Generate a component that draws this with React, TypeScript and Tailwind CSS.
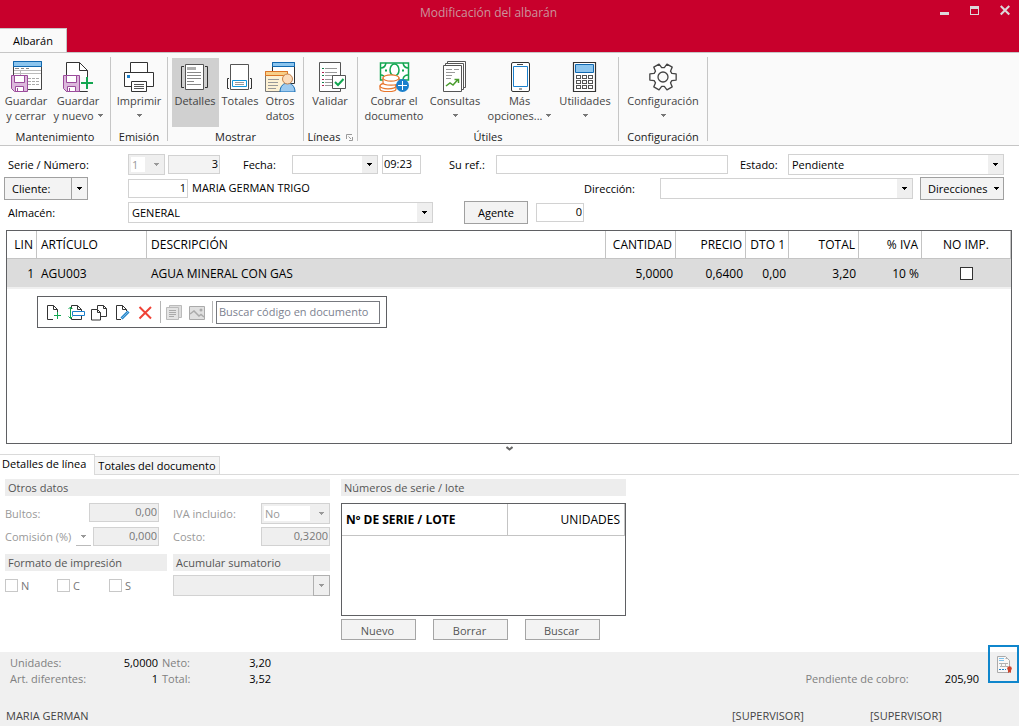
import React from "react";

function Caret({ className = "" }: { className?: string }) {
  return (
    <svg width="5" height="3" viewBox="0 0 5 3" className={"inline-block shrink-0 " + className} aria-hidden="true">
      <path d="M0 0H5V1H4V2H3V3H2V2H1V1H0Z" fill="currentColor" />
    </svg>
  );
}

function Icon({ children, size = 32 }: { children: React.ReactNode; size?: number }) {
  return (
    <svg width={size} height={size} viewBox={`0 0 ${size} ${size}`} fill="none" className="shrink-0" aria-hidden="true">
      {children}
    </svg>
  );
}

function Disk() {
  return (
    <g>
      <path d="M1.5 15.5H17.5V31.5H4.5L1.5 28.5Z" fill="#dcb8dc" stroke="#9b4b9b" />
      <path d="M4.5 15.5H14.5V22.5H4.5Z" fill="#fff" stroke="#9b4b9b" />
      <path d="M5.5 26.5H13.5V31.5H5.5Z" fill="#fff" stroke="#9b4b9b" />
      <path d="M7.5 28V31" stroke="#9b4b9b" />
    </g>
  );
}

const SaveCloseIcon = () => (
  <Icon>
    <path d="M3.5 1.5H31.5V29.5H3.5Z" fill="#fff" stroke="#444" />
    <path d="M3.5 1.5H31.5V6.5H3.5Z" fill="#8cc5ee" stroke="#1068b0" />
    <path d="M5 8.5H9M11 8.5H14M16 8.5H19" stroke="#888" />
    <path d="M4 10.500H31M4 13.500H31M10.500 11V16" stroke="#bbb" />
    <path d="M18 18.500H29M18 21.500H29M18 24.500H29" stroke="#aaa" strokeDasharray="3 1" />
    <Disk />
  </Icon>
);

const SaveNewIcon = () => (
  <Icon>
    <path d="M4.500 2.500H17.500L25.500 10.500V31.500H4.500Z" fill="#fff" stroke="#333" />
    <path d="M17.500 2.500V10.500H25.500" stroke="#333" />
    <path d="M18 17H32V31H18Z" fill="#fafafa" />
    <Disk />
    <path d="M25 17V29M19 23H31" stroke="#12a650" strokeWidth="2" />
  </Icon>
);

const PrinterIcon = () => (
  <Icon>
    <path d="M7.500 2.500H24.500V13H7.500Z" fill="#fff" stroke="#333" />
    <path d="M1.500 12.500H30.500V26.500H1.500Z" fill="#fff" stroke="#333" />
    <path d="M8.500 21.500H23.500V31.500H8.500Z" fill="#fff" stroke="#333" />
    <path d="M4 15H7V18H4Z" fill="#1b80cc" />
    <path d="M11 24.500H21M11 26.500H21M11 28.500H21" stroke="#555" />
  </Icon>
);

const DetailsIcon = () => (
  <Icon>
    <path d="M6.500 4.500H24.500V29.500H6.500Z" fill="#fff" stroke="#555" />
    <path d="M8 7H17V10H8Z" fill="#b0b0b0" />
    <path d="M8 12.500H22M8 15.500H22M8 18.500H22M8 21.500H15M8 24.500H22" stroke="#888" />
    <path d="M5 6.500H2.500V27.500H5M26 6.500H28.500V27.500H26" stroke="#333" />
  </Icon>
);

const TotalsIcon = () => (
  <Icon>
    <path d="M6.500 4.500H24.500V29.500H6.500Z" fill="#fff" stroke="#555" />
    <path d="M8.500 20.500H22.500V26.500H8.500Z" stroke="#1398dc" fill="#fff" />
    <path d="M11 22.500H20M11 24.500H20" stroke="#999" />
    <path d="M5 18.500H3.500V28.500H5M26 18.500H27.500V28.500H26" stroke="#333" />
  </Icon>
);

const OtherIcon = () => (
  <Icon>
    <path d="M8.500 2.500H30.500V23.500H8.500Z" fill="#fff" stroke="#333" />
    <path d="M8.500 2.500H30.500V6.500H8.500Z" fill="#8cc5ee" stroke="#1068b0" />
    <path d="M1.500 11.500H23.500V31.500H1.500Z" fill="#fdf1d4" stroke="#777" />
    <path d="M1.500 11.500H23.500V15.500H1.500Z" fill="#f8cf88" stroke="#dd7626" />
    <path d="M4 19.500H15M4 22.500H14M4 25.500H14M4 28.500H12" stroke="#999" />
    <path d="M16 32C16 20 31 20 31 32Z" fill="#9ccaf0" stroke="#1068b0" />
    <circle cx="23.500" cy="19" r="5" fill="#fbdcbc" stroke="#c4824d" />
  </Icon>
);

const ValidateIcon = () => (
  <Icon>
    <path d="M5.500 2.500H26.500V31.500H5.500Z" fill="#fff" stroke="#555" />
    <path d="M11 8.500H23M11 12.500H23M11 15.500H23M11 19.500H19M11 22.500H19M11 25.500H19" stroke="#999" />
    <path d="M8 8.500H10M8 15.500H10M8 22.500H10" stroke="#12804c" />
    <path d="M8 12.500H10M8 19.500H10M8 25.500H10" stroke="#b02050" />
    <path d="M18.500 15.500H31.500V28.500H18.500Z" fill="#fff" stroke="#555" />
    <path d="M21 22L24 25L29.500 19" stroke="#12a650" strokeWidth="2" />
  </Icon>
);

const MoneyIcon = () => (
  <Icon>
    <path d="M2.500 3H30.500V20H2.500Z" fill="#fff" stroke="#12a650" strokeWidth="1.500" />
    <path d="M3 8Q7 8 8 3M25 3Q26 8 30 8M3 15Q6 15 8 20M25 19Q26 15 30 15" stroke="#12a650" strokeWidth="1.500" />
    <ellipse cx="16.500" cy="10" rx="4.500" ry="6" stroke="#12a650" strokeWidth="1.500" />
    <path d="M7 10.500H9M24 10.500H26" stroke="#12a650" strokeWidth="2" />
    <g fill="#fff" stroke="#e8762c" strokeWidth="1.200">
      <path d="M2 26V29C2 32.500 18 32.500 18 29V26Z" />
      <ellipse cx="10" cy="26" rx="8" ry="2.800" />
      <path d="M5 18V22.500C5 26 21 26 21 22.500V18Z" />
      <ellipse cx="13" cy="18" rx="8" ry="3.200" />
    </g>
    <circle cx="24.500" cy="25.500" r="6.500" fill="#1b80cc" />
    <path d="M24.500 21V30M20 25.500H29" stroke="#fff" />
  </Icon>
);

const ReportsIcon = () => (
  <Icon>
    <g fill="#fff" stroke="#555">
      <path d="M8.500 1.500H26.500V27.500H8.500Z" />
      <path d="M6.500 3.500H24.500V29.500H6.500Z" />
      <path d="M4.500 5.500H22.500V31.500H4.500Z" />
    </g>
    <path d="M7 9.500H13M15 9.500H20M7 12.500H16M7 15.500H13M7 18.500H12" stroke="#999" />
    <path d="M7 26L11 23L14 25L19 19.500M15.500 19.500H19.500V23" stroke="#4a9c2d" strokeWidth="1.500" />
  </Icon>
);

const PhoneIcon = () => (
  <Icon>
    <rect x="7.500" y="2.500" width="18" height="29" rx="1.500" fill="#fff" stroke="#333" />
    <path d="M9.500 6.500H23.500V26.500H9.500Z" stroke="#1b80cc" />
    <path d="M13 4.500H19M15 29H18" stroke="#444" />
  </Icon>
);

const CalculatorIcon = () => (
  <Icon>
    <path d="M4.500 2.500H26.500V31.500H4.500Z" fill="#fff" stroke="#333" strokeWidth="1.200" />
    <path d="M6.500 4.500H24.500V12.500H6.500Z" fill="#8cc5ee" stroke="#1068b0" />
    {[15.5, 20.5, 25.5].map((y) =>
      [7.5, 13.5, 19.5].map((x) => <rect key={x + "-" + y} x={x} y={y} width="4" height="3" stroke="#555" />)
    )}
  </Icon>
);

const gearPoints = Array.from({ length: 6 }, (_, i) =>
  [[-22, 9.5], [-13, 13.5], [13, 13.5], [22, 9.5]].map(([offset, radius]) => {
    const angle = ((i * 60 + offset) * Math.PI) / 180;
    return `${16 + radius * Math.cos(angle)},${17 + radius * Math.sin(angle)}`;
  }).join(" ")
).join(" ");

const GearIcon = () => (
  <Icon>
    <polygon points={gearPoints} fill="#fff" stroke="#444" strokeWidth="1.300" strokeLinejoin="round" />
    <circle cx="16" cy="17" r="5" stroke="#444" strokeWidth="1.300" fill="#fafafa" />
  </Icon>
);

type RibbonButtonProps = {
  icon: React.ReactNode;
  first: string;
  second?: string;
  caret?: boolean;
  active?: boolean;
  className: string;
};

function RibbonButton({ icon, first, second, caret, active, className }: RibbonButtonProps) {
  return (
    <button
      type="button"
      aria-pressed={active}
      className={"flex h-[69px] shrink-0 flex-col items-center whitespace-nowrap pt-[2px] text-[#444] " + (active ? "bg-[#d0d0d0] " : "") + className}
    >
      {icon}
      <span className="pt-px leading-[15px]">{first}</span>
      <span className="flex h-[15px] items-center gap-1 leading-[15px]">
        {second}
        {caret && <Caret className="text-[#777]" />}
      </span>
    </button>
  );
}

function RibbonGroup({ label, children, launcher }: { label: string; children: React.ReactNode; launcher?: boolean }) {
  return (
    <section aria-label={label} className="flex shrink-0">
      <div className="flex flex-col">
        <div className="flex pt-px">{children}</div>
        <div className="flex items-center justify-center gap-[6px] pt-[2px] leading-4 text-[#222]">
          {label}
          {launcher && (
            <svg width="7" height="7" viewBox="0 0 7 7" fill="none" aria-hidden="true">
              <path d="M.5 5V.5H6M2.500 2.500L5 5M6.500 3V6.500H3" stroke="#999" />
            </svg>
          )}
        </div>
      </div>
      <div className="h-[84px] w-px bg-[#c6c6c6]" />
    </section>
  );
}

type ComboProps = {
  label: string;
  id?: string;
  value?: string;
  disabled?: boolean;
  whiteText?: boolean;
  outlinedArrow?: boolean;
  className: string;
};

function Combo({ label, id, value = "", disabled, whiteText, outlinedArrow, className }: ComboProps) {
  return (
    <div className={"relative flex border border-[#d2d2d2] " + (disabled ? "bg-[#efefef] text-[#999] " : "bg-white ") + className}>
      <select
        id={id}
        aria-label={label}
        disabled={disabled}
        defaultValue={value}
        className={
          "min-w-0 flex-1 appearance-none leading-[15px] opacity-100 outline-none " +
          (whiteText ? "my-[2px] ml-[2px] mr-[19px] bg-white pl-px" : "bg-transparent pl-[3px] pr-4")
        }
      >
        <option value={value}>{value}</option>
      </select>
      <span
        className={
          "pointer-events-none absolute flex items-center justify-center bg-[#efefef] " +
          (outlinedArrow ? "-inset-y-px -right-px w-[17px] border border-[#b0b0b0]" : "inset-y-0 right-0 w-[15px]")
        }
      >
        <Caret />
      </span>
    </div>
  );
}

type FieldProps = { label: string; id?: string; value?: string; disabled?: boolean; className: string };

function Field({ label, id, value, disabled, className }: FieldProps) {
  return (
    <input
      id={id}
      aria-label={label}
      disabled={disabled}
      defaultValue={value}
      className={"h-[19px] min-w-0 border border-[#d2d2d2] px-px pb-[2px] leading-[15px] outline-none " + className}
    />
  );
}

function Tool({ label, disabled, children }: { label: string; disabled?: boolean; children: React.ReactNode }) {
  return (
    <button type="button" aria-label={label} disabled={disabled} className="flex size-[17px] items-center justify-center">
      <Icon size={17}>{children}</Icon>
    </button>
  );
}

function LineToolbar() {
  return (
    <div className="ml-[30px] mt-[7px] flex h-8 w-[350px] items-center border border-[#5f6063] pl-[7px] pr-[6px]">
      <div className="flex gap-[6px]">
        <Tool label="Nueva línea">
          <path d="M8 15.500H2.500V1.500H8.500L12.500 5.500V8M8.500 1.500V5.500H12.500" stroke="#333" />
          <path d="M12.500 8V15M9 11.500H16" stroke="#12a650" />
        </Tool>
        <Tool label="Insertar línea">
          <path d="M3.500 5V1.500H9.500L13.500 5.500V7M9.500 1.500V5.500H13.500M3.500 13V15.500H13.500V12" stroke="#333" />
          <path d="M4.500 7.500H16.500V11.500H4.500Z" stroke="#1b80cc" />
          <path d="M2.500 3V14M.5 5L2.500 3L4.500 5M.5 12.500L2.500 14.500L4.500 12.500" stroke="#12a650" />
        </Tool>
        <Tool label="Duplicar línea">
          <path d="M6.500 5V1.500H12.500L15.500 4.500V12.500H10M12.500 1.500V4.500H15.500" stroke="#333" />
          <path d="M.5 5.500H6.500L9.500 8.500V16H.5ZM6.500 5.500V8.500H9.500" stroke="#333" />
        </Tool>
        <Tool label="Modificar línea">
          <path d="M7 15.500H2.500V1.500H8.500L12.500 5.500V7M8.500 1.500V5.500H12.500" stroke="#333" />
          <path d="M7.500 14.500L14.500 7.500" stroke="#2786ca" strokeWidth="3" />
          <path d="M8 14L14 8" stroke="#79b9e5" />
        </Tool>
        <Tool label="Eliminar línea">
          <path d="M2.500 3L14 14.500M14 3L2.500 14.500" stroke="#ef4236" strokeWidth="2" />
        </Tool>
      </div>
      <span className="ml-[6px] h-[22px] w-px bg-[#b5b5b5]" />
      <div className="ml-[5px] flex gap-[6px]">
        <Tool label="Notas" disabled>
          <path d="M3.500 1.500H15.500V13.500H3.500Z" fill="#ddd" stroke="#bbb" />
          <path d="M.5 3.500H12.500V15.500H.5Z" fill="#e4e4e4" stroke="#bbb" />
          <path d="M3 6.500H10M3 8.500H10M3 10.500H10M3 12.500H8" stroke="#aaa" />
        </Tool>
        <Tool label="Imagen" disabled>
          <path d="M.5 2.500H15.500V15.500H.5Z" fill="#e0e0e0" stroke="#aaa" />
          <path d="M1 10L5 7L10 12L12 10.500L15 13" stroke="#aaa" strokeWidth="1.500" />
          <circle cx="12" cy="6" r="1.500" fill="#aaa" />
        </Tool>
      </div>
      <span className="ml-[6px] h-[22px] w-px bg-[#b5b5b5]" />
      <input
        aria-label="Buscar código en documento"
        placeholder="Buscar código en documento"
        className="ml-[3px] h-[23px] min-w-0 flex-1 border border-[#77797f] px-[2px] pb-px outline-none placeholder:text-[#7c8290]"
      />
    </div>
  );
}

const columns = [
  { title: "LIN", value: "1", width: "w-[30px]", align: "text-right" },
  { title: "ARTÍCULO", value: "AGU003", width: "w-[110px]", align: "text-left" },
  { title: "DESCRIPCIÓN", value: "AGUA MINERAL CON GAS", width: "", align: "text-left" },
  { title: "CANTIDAD", value: "5,0000", width: "w-[70px]", align: "text-right" },
  { title: "PRECIO", value: "0,6400", width: "w-[70px]", align: "text-right" },
  { title: "DTO 1", value: "0,00", width: "w-[43px]", align: "text-right" },
  { title: "TOTAL", value: "3,20", width: "w-[70px]", align: "text-right" },
  { title: "% IVA", value: "10 %", width: "w-[63px]", align: "text-right" },
];

function LinesGrid() {
  return (
    <div className="ml-[6px] mr-[7px] h-[214px] border border-[#5f6063]">
      <table className="w-full table-fixed border-separate border-spacing-0 text-[12px]">
        <thead>
          <tr className="h-7">
            {columns.map((c) => (
              <th key={c.title} className={"border-b border-r border-[#c4c4c4] py-0 pl-1 pr-[3px] font-normal whitespace-nowrap " + c.width + " " + c.align}>
                {c.title}
              </th>
            ))}
            <th className="w-[89px] border-b border-r border-[#c4c4c4] p-0 text-center font-normal">NO IMP.</th>
          </tr>
        </thead>
        <tbody>
          <tr className="h-[30px] bg-[#dcdcdc]">
            {columns.map((c) => (
              <td key={c.title} className={"border-b-2 border-[#f0f0f0] py-0 pl-1 pr-[3px] whitespace-nowrap " + c.align}>
                {c.value}
              </td>
            ))}
            <td className="border-b-2 border-[#f0f0f0] p-0">
              <input type="checkbox" aria-label="No imprimir" className="mx-auto block size-[13px] appearance-none border border-[#333] bg-white" />
            </td>
          </tr>
        </tbody>
      </table>
      <LineToolbar />
    </div>
  );
}

function SectionBar({ children, className = "" }: { children: React.ReactNode; className?: string }) {
  return <h2 className={"h-[17px] bg-[#ededed] pl-[3px] leading-[18px] text-[#555] " + className}>{children}</h2>;
}

function DetailsPanel() {
  return (
    <div className="flex gap-[11px] pl-[5px] pt-1">
      <div className="w-[325px] text-[#999]">
        <SectionBar>Otros datos</SectionBar>
        <div className="mt-[7px] flex flex-col gap-[3px]">
          <div className="flex h-[21px] items-start">
            <label htmlFor="bultos" className="w-[84px] leading-[21px]">Bultos:</label>
            <Field id="bultos" label="Bultos" value="0,00" disabled className="w-[70px] bg-[#efefef] text-right text-[#777]" />
            <label htmlFor="iva" className="ml-[14px] w-[88px] leading-[21px]">IVA incluido:</label>
            <Combo id="iva" label="IVA incluido" value="No" disabled whiteText className="h-[21px] w-[69px]" />
          </div>
          <div className="flex h-[19px] items-start">
            <label htmlFor="comision" className="w-[71px] leading-[19px]">Comisión (%)</label>
            <button type="button" aria-label="Tipo de comisión" className="flex h-[19px] w-[15px] items-center justify-center border-b border-[#bbb]">
              <Caret />
            </button>
            <Field id="comision" label="Comisión" value="0,000" disabled className="ml-[2px] w-[66px] bg-[#efefef] text-right text-[#777]" />
            <label htmlFor="costo" className="ml-[14px] w-[88px] leading-[19px]">Costo:</label>
            <Field id="costo" label="Costo" value="0,3200" disabled className="w-[69px] bg-[#efefef] text-right text-[#777]" />
          </div>
        </div>
        <div className="mt-2 flex gap-[6px]">
          <div className="w-[162px]">
            <SectionBar>Formato de impresión</SectionBar>
            <div className="mt-[7px] flex text-[#777]">
              {["N", "C", "S"].map((f) => (
                <label key={f} className="flex w-[52px] items-center gap-[3px] leading-[15px]">
                  <input type="checkbox" disabled className="size-[13px] appearance-none border border-[#c8c8c8] bg-white" />
                  {f}
                </label>
              ))}
            </div>
          </div>
          <div className="min-w-0 flex-1">
            <SectionBar>Acumular sumatorio</SectionBar>
            <Combo label="Acumular sumatorio" disabled outlinedArrow className="mt-1 h-[21px]" />
          </div>
        </div>
      </div>
      <div className="w-[285px]">
        <SectionBar>Números de serie / lote</SectionBar>
        <div className="mt-[7px] h-[113px] border border-[#5f6063]">
          <table className="w-full table-fixed border-separate border-spacing-0 text-[12px]">
            <thead>
              <tr className="h-8">
                <th className="w-[166px] border-b border-r border-[#c4c4c4] py-0 pl-1 pr-0 text-left font-bold">Nº DE SERIE / LOTE</th>
                <th className="border-b border-r border-[#c4c4c4] py-0 pl-0 pr-1 text-right font-normal">UNIDADES</th>
              </tr>
            </thead>
          </table>
        </div>
        <div className="mt-[3px] flex gap-[17px]">
          {["Nuevo", "Borrar", "Buscar"].map((b) => (
            <button key={b} type="button" className="h-[21px] w-[75px] border border-[#a5a5a5] bg-[#f3f3f3] pt-px pr-[2px] leading-[15px] text-[#555]">
              {b}
            </button>
          ))}
        </div>
      </div>
    </div>
  );
}

function DocumentForm() {
  return (
    <form className="flex flex-col pb-[6px] pl-1 pr-[15px] pt-[6px]" onSubmit={(e) => e.preventDefault()}>
      <div className="flex h-6 items-center">
        <label htmlFor="serie" className="ml-1 w-[120px]">Serie / Número:</label>
        <Combo id="serie" label="Serie" value="1" disabled whiteText className="h-[21px] w-[37px]" />
        <Field label="Número" value="3" className="ml-[3px] w-[52px] bg-[#f3f3f3] text-right" />
        <label htmlFor="fecha" className="ml-[23px] w-[49px]">Fecha:</label>
        <Combo id="fecha" label="Fecha" className="h-[19px] w-[86px]" />
        <Field label="Hora" value="09:23" className="ml-1 w-[39px]" />
        <label htmlFor="ref" className="ml-7 w-[47px]">Su ref.:</label>
        <Field id="ref" label="Su referencia" className="flex-1" />
        <label htmlFor="estado" className="ml-3 w-12">Estado:</label>
        <Combo id="estado" label="Estado" value="Pendiente" className="h-[21px] w-[216px]" />
      </div>
      <div className="flex h-6 items-center">
        <div className="flex h-[23px] w-[84px] border border-[#a0a0a0] bg-[#f3f3f3]">
          <button type="button" className="flex-1 pl-[7px] text-left">Cliente:</button>
          <button type="button" aria-label="Más opciones de cliente" className="flex w-4 items-center justify-center border-l border-[#a0a0a0]">
            <Caret />
          </button>
        </div>
        <Field label="Código de cliente" value="1" className="ml-10 w-[60px] text-right" />
        <span className="ml-1 flex-1 pb-[2px]">MARIA GERMAN TRIGO</span>
        <label htmlFor="direccion" className="w-[76px]">Dirección:</label>
        <Combo id="direccion" label="Dirección" className="h-[21px] w-[253px]" />
        <button type="button" className="ml-[7px] flex h-[23px] w-[84px] items-center justify-between border border-[#a0a0a0] bg-[#f3f3f3] pl-[7px] pr-1">
          Direcciones
          <Caret />
        </button>
      </div>
      <div className="flex h-6 items-center">
        <label htmlFor="almacen" className="ml-1 w-[120px]">Almacén:</label>
        <Combo id="almacen" label="Almacén" value="GENERAL" className="h-[21px] w-[305px]" />
        <button type="button" className="ml-[31px] h-[23px] w-16 border border-[#a0a0a0] bg-[#f3f3f3]">Agente</button>
        <Field label="Código de agente" value="0" className="ml-2 w-12 text-right" />
      </div>
    </form>
  );
}

export default function App() {
  return (
    <div className="flex min-h-screen flex-col bg-white font-['Open_Sans','Noto_Sans',sans-serif] text-[11px] leading-[15px] text-black">
      <header className="bg-[#c8002c]">
        <div className="grid h-7 grid-cols-[1fr_auto_1fr] items-start">
          <h1 className="col-start-2 mr-[42px] text-[12px] leading-[26px] text-[#cb949c]">Modificación del albarán</h1>
          <div className="flex justify-end gap-[15px] pr-[7px] pt-[5px] text-[#dcd8da]">
            <button type="button" aria-label="Minimizar" className="flex w-[15px] justify-center">
              <svg width="9" height="12" viewBox="0 0 9 12"><path d="M0 7H9V10H0Z" fill="currentColor" /></svg>
            </button>
            <button type="button" aria-label="Maximizar" className="flex w-[15px] justify-center">
              <svg width="9" height="12" viewBox="0 0 9 12"><path d="M0 1H9V10H0ZM1 4V9H8V4Z" fill="currentColor" fillRule="evenodd" /></svg>
            </button>
            <button type="button" aria-label="Cerrar" className="flex w-[15px] justify-center">
              <svg width="10" height="12" viewBox="0 0 10 12"><path d="M.7 1L9.300 9.500M9.300 1L.7 9.500" stroke="currentColor" strokeWidth="2.200" /></svg>
            </button>
          </div>
        </div>
        <button type="button" className="block h-6 w-[67px] border-r border-t border-[#c6c6c6] bg-[#fafafa] leading-6">Albarán</button>
      </header>

      <nav className="flex h-[94px] border-b border-t border-[#c6c6c6] bg-[#fafafa] pt-1" aria-label="Cinta de opciones">
        <RibbonGroup label="Mantenimiento">
          <RibbonButton className="w-[52px]" icon={<SaveCloseIcon />} first="Guardar" second="y cerrar" />
          <RibbonButton className="mr-[6px] w-[52px]" icon={<SaveNewIcon />} first="Guardar" second="y nuevo" caret />
        </RibbonGroup>
        <RibbonGroup label="Emisión">
          <RibbonButton className="w-14" icon={<PrinterIcon />} first="Imprimir" caret />
        </RibbonGroup>
        <RibbonGroup label="Mostrar">
          <RibbonButton className="ml-1 w-[47px] pr-px" icon={<DetailsIcon />} first="Detalles" active />
          <RibbonButton className="w-[42px]" icon={<TotalsIcon />} first="Totales" />
          <RibbonButton className="mr-1 w-[38px]" icon={<OtherIcon />} first="Otros" second="datos" />
        </RibbonGroup>
        <RibbonGroup label="Líneas" launcher>
          <RibbonButton className="w-[53px] pr-px" icon={<ValidateIcon />} first="Validar" />
        </RibbonGroup>
        <RibbonGroup label="Útiles">
          <RibbonButton className="ml-1 w-16" icon={<MoneyIcon />} first="Cobrar el" second="documento" />
          <RibbonButton className="w-[58px]" icon={<ReportsIcon />} first="Consultas" caret />
          <RibbonButton className="w-[71px]" icon={<PhoneIcon />} first="Más" second="opciones..." caret />
          <RibbonButton className="mr-[3px] w-[60px]" icon={<CalculatorIcon />} first="Utilidades" caret />
        </RibbonGroup>
        <RibbonGroup label="Configuración">
          <RibbonButton className="w-[88px]" icon={<GearIcon />} first="Configuración" caret />
        </RibbonGroup>
      </nav>

      <main className="flex-1">
        <DocumentForm />
        <LinesGrid />
        <button type="button" aria-label="Plegar panel" className="mx-auto flex h-[10px] w-4 items-start justify-center pt-[2px]">
          <svg width="7" height="5" viewBox="0 0 7 5" fill="none" aria-hidden="true"><path d="M.5 1L3.500 3.500L6.500 1" stroke="#666" strokeWidth="2" /></svg>
        </button>
        <div role="tablist" className="flex h-[21px] items-end border-b border-[#dadada]">
          <button role="tab" aria-selected="true" type="button" className="-mb-px h-[21px] w-[95px] whitespace-nowrap border-r border-t border-[#dadada] bg-white pb-[3px] pl-[2px] text-left">
            Detalles de línea
          </button>
          <button role="tab" aria-selected="false" type="button" className="h-[18px] w-[125px] whitespace-nowrap border-r border-t border-[#dadada] bg-[#f5f5f5]">
            Totales del documento
          </button>
        </div>
        <DetailsPanel />
      </main>

      <footer className="relative flex h-[74px] flex-col bg-[#f0f0f0] pt-[3px] text-[#808080]">
        <div className="flex justify-between pl-[10px] pr-10">
          <dl className="grid grid-cols-[87px_57px_30px_75px] gap-x-1 leading-4">
            <dt>Unidades:</dt>
            <dd className="text-right text-black">5,0000</dd>
            <dt>Neto:</dt>
            <dd className="text-right text-black">3,20</dd>
            <dt>Art. diferentes:</dt>
            <dd className="text-right text-black">1</dd>
            <dt>Total:</dt>
            <dd className="text-right text-black">3,52</dd>
          </dl>
          <dl className="flex items-end gap-9 leading-4">
            <dt>Pendiente de cobro:</dt>
            <dd className="text-black">205,90</dd>
          </dl>
        </div>
        <div className="mt-auto flex pb-[3px] pl-[6px] text-[#444]">
          <span className="flex-1">MARIA GERMAN</span>
          <span className="w-[138px]">[SUPERVISOR]</span>
          <span className="w-[149px]">[SUPERVISOR]</span>
        </div>
        <button type="button" aria-label="Certificado" className="absolute -top-[7px] right-0 flex h-[38px] w-[31px] items-center justify-center border-2 border-[#0f86cc]">
          <Icon size={18}>
            <path d="M2.500 1.500H10.500L14.500 5.500V17.500H2.500Z" fill="#f8f8f8" stroke="#aaa" />
            <path d="M4 3.500H9M4 5.500H9" stroke="#7cc3ee" />
            <path d="M10.500 3.500H13M4 8.500H13M5 11.500H13" stroke="#b0b0b0" />
            <path d="M6.500 9V12M10.500 9V12" stroke="#bbb" />
            <path d="M4 14.500H11" stroke="#1b80cc" strokeDasharray="2 1" />
            <circle cx="14.500" cy="13.500" r="2.300" fill="#cc432d" />
            <path d="M13 15H16V18L14.500 17L13 18Z" fill="#cc432d" />
          </Icon>
        </button>
      </footer>
    </div>
  );
}
